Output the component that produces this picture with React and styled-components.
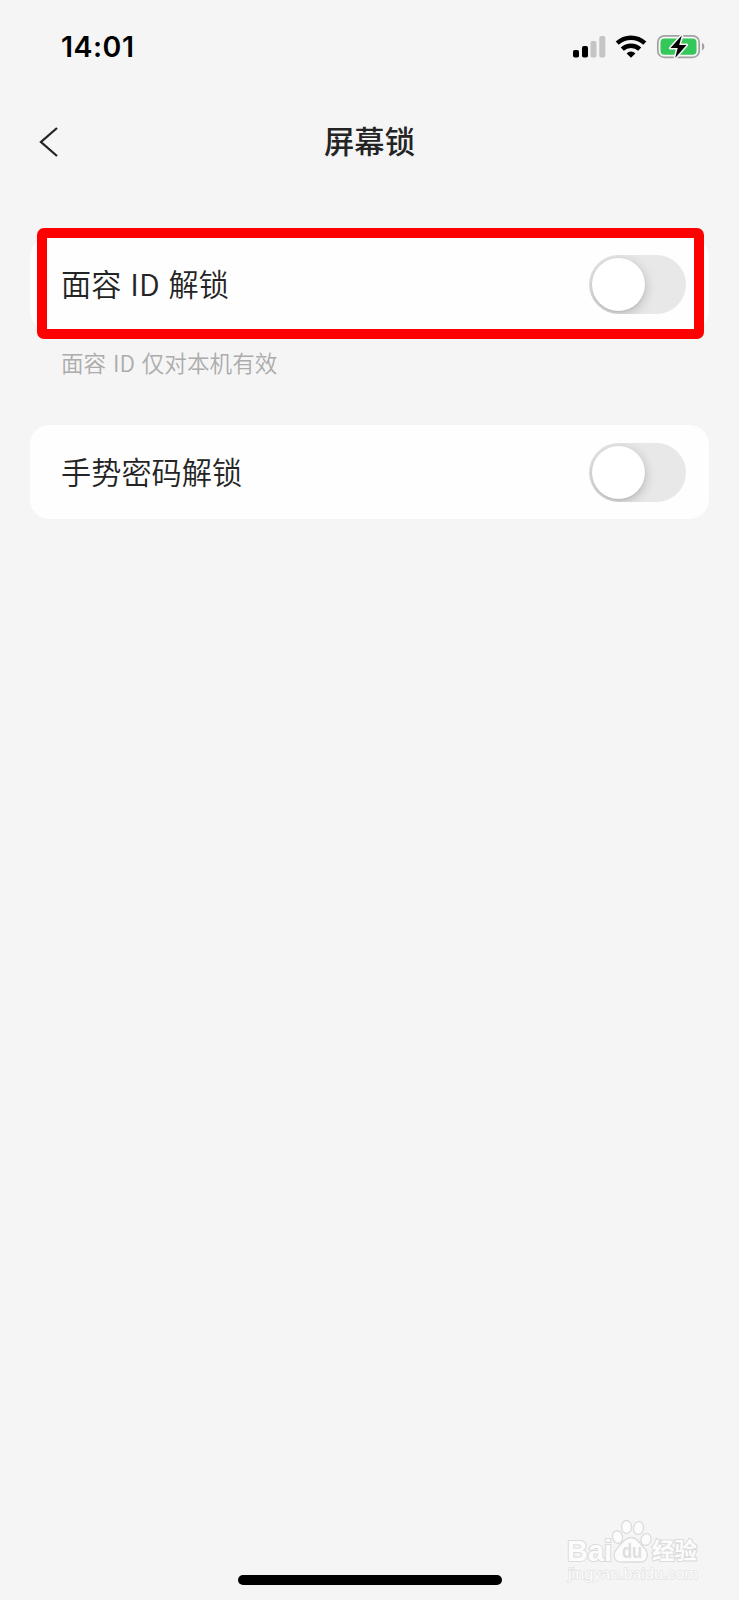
import styled, { createGlobalStyle } from 'styled-components'

const GlobalStyle = createGlobalStyle`
    * {
        box-sizing: border-box;
    }
    body {
        margin: 0;
        background-color: #f5f5f5;
    }
`;

const Container = styled.div`
    width: 739px;
    height: 1600px;
    position: relative;
    display: flex;
    flex-direction: column;
    background-color: #f5f5f5;
    color: #242424;
    font-family: 'Noto Sans CJK SC', sans-serif;
    overflow: hidden;
`;

const StatusBar = styled.div`
    height: 94px;
    padding: 0 34px 0 61px;
    display: flex;
    align-items: center;
    justify-content: space-between;
`;

const Time = styled.span`
    font-family: Inter, sans-serif;
    font-size: 28.5px;
    font-weight: 600;
    line-height: 34px;
    letter-spacing: 0.5px;
    color: black;
`;

const Header = styled.div`
    height: 96px;
    padding: 0 38px;
    display: grid;
    grid-template-columns: 40px 1fr 40px;
    align-items: center;
`;

const Title = styled.h1`
    margin: 0;
    padding-bottom: 5px;
    font-size: 30.3px;
    font-weight: 500;
    line-height: 40px;
    text-align: center;
`;

const List = styled.div`
    padding: 47px 30px 0;
    display: flex;
    flex-direction: column;
`;

const Card = styled.div`
    position: relative;
    height: 94px;
    padding: 0 23px 0 31px;
    display: flex;
    align-items: center;
    justify-content: space-between;
    background-color: #fefefe;
    border-radius: 20px;
`;

const Highlight = styled.div`
    position: absolute;
    top: -9px;
    left: 7px;
    right: 5px;
    height: 111px;
    border: 10px solid #fe0000;
    border-radius: 7px;
`;

const Label = styled.span`
    padding-bottom: 3px;
    font-size: 30.2px;
    font-weight: 350;
    line-height: 40px;
    word-spacing: 2.2px;
`;

const Hint = styled.p`
    margin: 0;
    height: 94px;
    padding: 16px 31px 0;
    font-size: 22.6px;
    font-weight: 350;
    line-height: 32px;
    word-spacing: 1.8px;
    color: #acacac;
`;

const Switch = styled.div`
    width: 97px;
    height: 59px;
    padding: 3px;
    display: flex;
    background-color: #e8e8e8;
    border-radius: 30px;
    overflow: hidden;
`;

const Knob = styled.div`
    width: 53px;
    height: 53px;
    border-radius: 50%;
    background-color: white;
    box-shadow: 0 3px 12px rgba(0, 0, 0, 0.22), 0 1px 2px rgba(0, 0, 0, 0.08);
`;

const Footer = styled.div`
    margin-top: auto;
    height: 25px;
    display: flex;
    justify-content: center;
`;

const HomeBar = styled.div`
    width: 264px;
    height: 10px;
    border-radius: 5px;
    background-color: black;
`;

const Watermark = styled.svg`
    position: absolute;
    left: 555px;
    top: 1510px;
`;

const StatusIcons = () => (
    <svg width="134" height="30" viewBox="571 32 134 30">
        <rect x="573" y="50" width="6" height="7.5" rx="1.8" />
        <rect x="582" y="46" width="6" height="11.5" rx="1.8" />
        <rect x="590.5" y="41" width="6" height="16.5" rx="1.8" fill="#c4c4c4" />
        <rect x="599.3" y="36" width="6" height="21.5" rx="1.8" fill="#c4c4c4" />
        <g fill="none" stroke="black" strokeWidth="4.4">
            <path d="M617.2 43.2a20 20 0 0 1 27.6 0" />
            <path d="M622.3 49.2a12.5 12.5 0 0 1 17.4 0" />
        </g>
        <path d="M631 57.8l-4.4-4.400a6.300 6.300 0 0 1 8.800 0z" />
        <rect x="657.8" y="35.8" width="41.4" height="21.6" rx="6.5" fill="none" stroke="#a2a2a2" strokeWidth="1.7" />
        <rect x="660.5" y="38.5" width="36" height="16.2" rx="4" fill="#34c759" />
        <path d="M702 42.8q2.4 1.2 2.4 3.8t-2.4 3.8z" fill="#a2a2a2" />
        <path
            d="M681.8 35.5L670.5 48h7.2l-2.500 10L686.500 45h-7.300z"
            stroke="#f5f5f5"
            strokeWidth="3.2"
            strokeLinejoin="round"
            paintOrder="stroke"
        />
    </svg>
)

const BackIcon = () => (
    <svg width="22" height="32" viewBox="0 0 22 32" fill="none" stroke="#242424" strokeWidth="2.3">
        <path d="M19 2L3 16l16 14" />
    </svg>
)

const Toggle = () => (
    <Switch>
        <Knob />
    </Switch>
)

const Logo = () => (
    <Watermark width="150" height="75" viewBox="555 1510 150 75">
        <g fill="#fcfcfc" stroke="#dcdcdc" strokeWidth="1.3" fontFamily="'Liberation Sans', sans-serif" fontWeight="700">
            <text x="567" y="1560.5" fontSize="29" textLength="45" lengthAdjust="spacingAndGlyphs" strokeWidth="2.2" paintOrder="stroke">Bai</text>
            <ellipse cx="617.5" cy="1537" rx="5" ry="6.3" transform="rotate(-15 617.5 1537)" />
            <ellipse cx="626.5" cy="1527" rx="5" ry="6.5" />
            <ellipse cx="638.5" cy="1528" rx="5" ry="6.5" transform="rotate(10 638.5 1528)" />
            <ellipse cx="646" cy="1539.5" rx="5" ry="6" transform="rotate(15 646 1539.5)" />
            <path d="M631 1537.5c7 0 9 7 13.500 11c5 5 3 13.500-4 13.500h-19c-8 0-9.500-8-4.500-13.500c4-4 7-11 14-11z" />
            <text x="622" y="1558" fontSize="20" fill="#dedede" stroke="none" textLength="20" lengthAdjust="spacingAndGlyphs">du</text>
            <text x="652" y="1559" fontSize="22.5" textLength="45" strokeWidth="2.2" paintOrder="stroke" fontFamily="'Noto Sans CJK SC', sans-serif">经验</text>
        </g>
        <text
            x="568"
            y="1579"
            fontSize="15"
            fill="#fcfcfc"
            stroke="#e4e4e4"
            strokeWidth="1.4"
            paintOrder="stroke"
            textLength="130"
            lengthAdjust="spacingAndGlyphs"
            fontFamily="'Liberation Sans', sans-serif"
        >
            jingyan.baidu.com
        </text>
    </Watermark>
)

const App = () => {
  return (
    <Container>
        <GlobalStyle />
        <StatusBar>
            <Time>14:01</Time>
            <StatusIcons />
        </StatusBar>
        <Header>
            <BackIcon />
            <Title>屏幕锁</Title>
        </Header>
        <List>
            <Card>
                <Label>面容 ID 解锁</Label>
                <Toggle />
                <Highlight />
            </Card>
            <Hint>面容 ID 仅对本机有效</Hint>
            <Card>
                <Label>手势密码解锁</Label>
                <Toggle />
            </Card>
        </List>
        <Footer>
            <HomeBar />
        </Footer>
        <Logo />
    </Container>
  )
}

export default App
